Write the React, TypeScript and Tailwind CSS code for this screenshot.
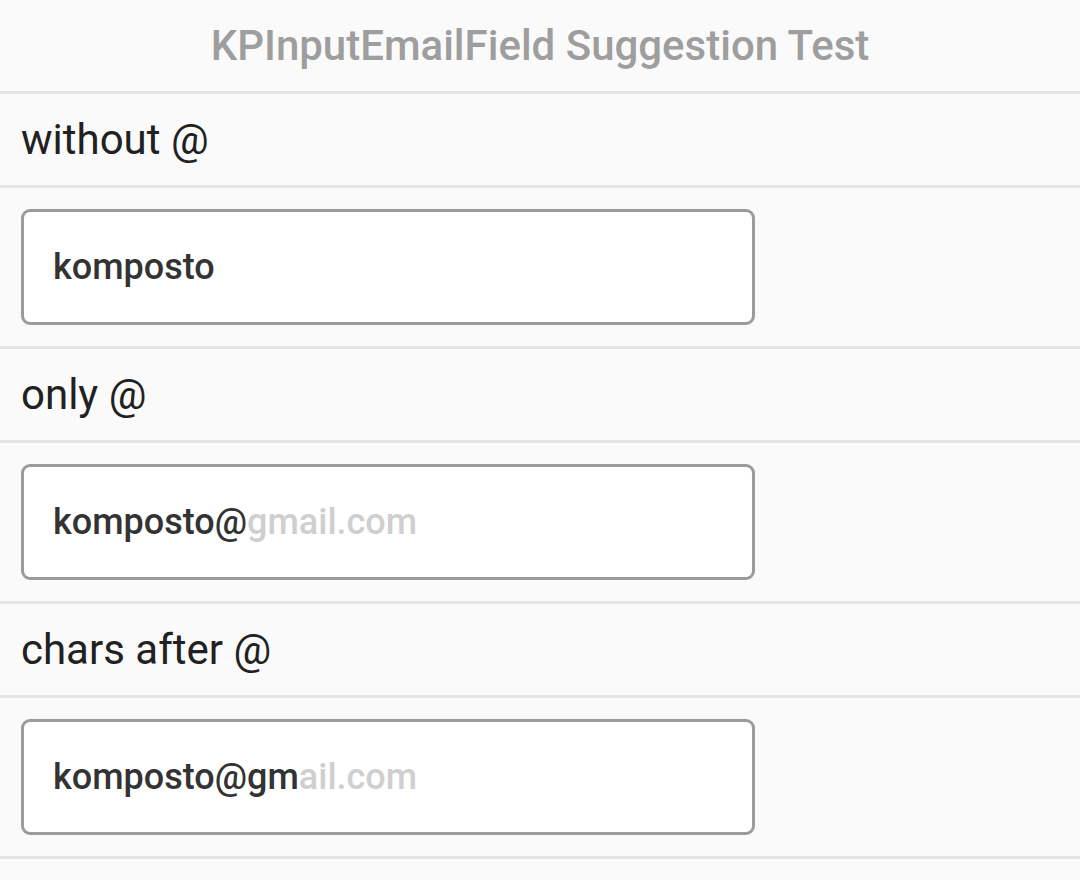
const rows = [
  { label: "without @", typed: "komposto", hint: "" },
  { label: "only @", typed: "komposto@", hint: "gmail.com" },
  { label: "chars after @", typed: "komposto@gm", hint: "ail.com" },
];

function EmailField({ typed, hint }: { typed: string; hint: string }) {
  return (
    <div className="flex h-[161px] items-center border-b-[3px] border-[#e4e4e4] px-[21px]">
      <div className="flex h-[116px] w-[734px] items-center rounded-[9px] border-[3px] border-[#9b9b9b] bg-white pl-[29px]">
        <span className="text-[36px] font-medium text-[#333333]">{typed}</span>
        <span className="text-[36px] font-medium text-[#cfcfcf]">{hint}</span>
      </div>
    </div>
  );
}

export default function App() {
  return (
    <div className="min-h-[880px] bg-[#fafafa] font-['Roboto',sans-serif]">
      <div className="flex h-[94px] items-center justify-center border-b-[3px] border-[#e4e4e4]">
        <h1 className="text-[42px] font-medium text-[#9e9e9e]">
          KPInputEmailField Suggestion Test
        </h1>
      </div>
      {rows.map((row) => (
        <div key={row.label}>
          <div className="flex h-[94px] items-center border-b-[3px] border-[#e4e4e4] px-[21px]">
            <span className="text-[42px] text-[#212121]">{row.label}</span>
          </div>
          <EmailField typed={row.typed} hint={row.hint} />
        </div>
      ))}
    </div>
  );
}
